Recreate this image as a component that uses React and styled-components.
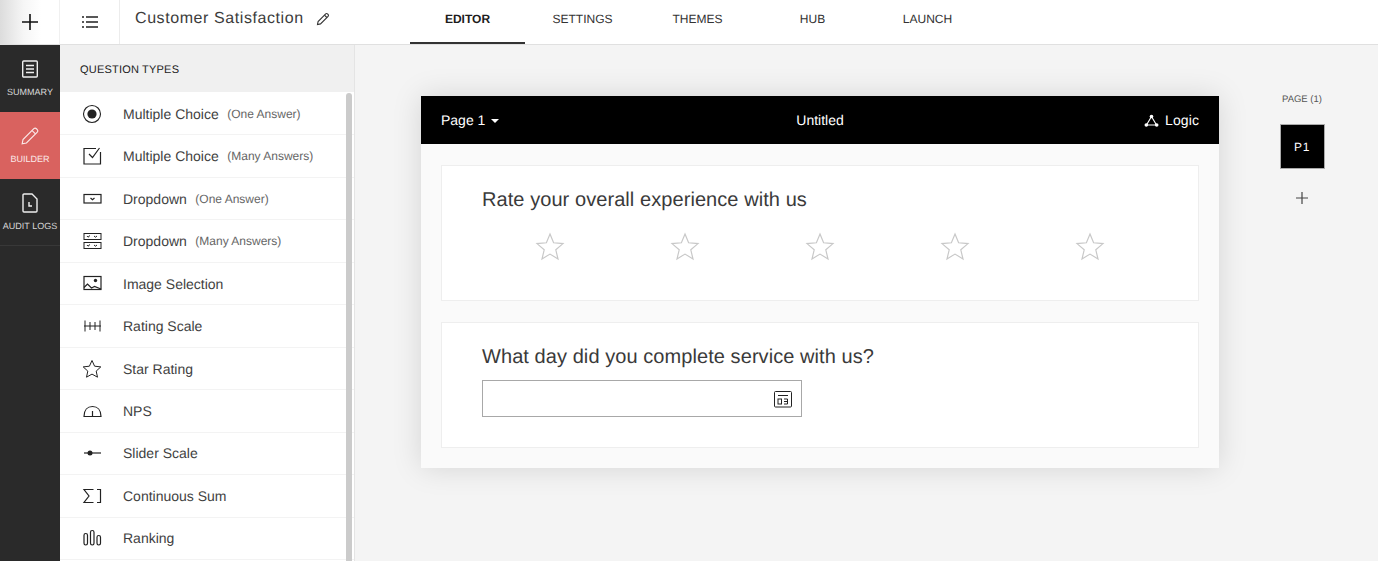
import styled, { createGlobalStyle } from 'styled-components';

const GlobalStyle = createGlobalStyle`
    html, body {
        margin: 0;
        height: 100%;
        overflow: hidden;
        background: #f4f4f4;
        font-family: "Liberation Sans", Arial, sans-serif;
        text-rendering: geometricPrecision;
    }
    * { box-sizing: border-box; }
`

const Page = styled.div`
    display: flex;
    flex-direction: column;
    width: 1378px;
    height: 561px;
    overflow: hidden;
`

const TopBar = styled.header`
    display: flex;
    flex: none;
    height: 45px;
    background: #fff;
    border-bottom: 1px solid #e0e0e0;
`

const AddCell = styled.div`
    display: flex;
    align-items: center;
    justify-content: center;
    width: 60px;
    background: linear-gradient(90deg, #dcdcdc 0%, #f6f6f6 40%, #fff 70%);
    border-right: 1px solid #f0f0f0;
`

const MenuCell = styled.div`
    display: flex;
    align-items: center;
    justify-content: center;
    width: 60px;
    border-right: 1px solid #ececec;
`

const TitleCell = styled.div`
    display: flex;
    align-items: center;
    gap: 12px;
    width: 290px;
    padding: 0 0 6px 15px;
    font-size: 16px;
    letter-spacing: 0.58px;
    color: #3c3c3c;
`

const Tabs = styled.nav`
    display: flex;
`

const Tab = styled.a`
    display: flex;
    align-items: center;
    justify-content: center;
    width: 115px;
    height: 44px;
    padding-bottom: 5px;
    font-size: 12px;
    font-weight: ${({ $active }) => ($active ? 700 : 400)};
    color: ${({ $active }) => ($active ? '#1c1c1c' : '#333')};
    border-bottom: 2px solid ${({ $active }) => ($active ? '#333' : 'transparent')};
`

const Body = styled.div`
    display: flex;
    flex: 1;
    min-height: 0;
`

const Rail = styled.aside`
    flex: none;
    width: 60px;
    background: #2a2a2a;
`

const RailItem = styled.a`
    display: flex;
    flex-direction: column;
    align-items: center;
    height: 67px;
    padding-top: 14px;
    gap: 8px;
    font-size: 9px;
    line-height: 10px;
    white-space: nowrap;
    color: ${({ $active }) => ($active ? '#fbe9e9' : '#d8d8d8')};
    background: ${({ $active }) => ($active ? '#d9625f' : 'transparent')};
    border-bottom: ${({ $divided }) => ($divided ? '1px solid #383838' : 'none')};
`

const RailIcon = styled.span`
    display: flex;
    align-items: center;
    justify-content: center;
    height: 20px;
`

const Panel = styled.section`
    display: flex;
    flex-direction: column;
    flex: none;
    width: 295px;
    background: #fff;
    border-right: 1px solid #e4e4e4;
`

const PanelHeading = styled.h3`
    display: flex;
    align-items: center;
    flex: none;
    height: 47px;
    margin: 0;
    padding: 2px 0 0 20px;
    background: #f0f0f0;
    font-size: 11px;
    font-weight: 400;
    letter-spacing: 0.2px;
    color: #222;
`

const PanelList = styled.div`
    position: relative;
    flex: 1;
    min-height: 0;
    padding-top: 1px;
    overflow: hidden;
`

const Scrollbar = styled.div`
    position: absolute;
    top: 1px;
    right: 2px;
    bottom: 0;
    width: 6px;
    border-radius: 3px 3px 0 0;
    background: #cbcbcb;
`

const TypeRow = styled.div`
    display: flex;
    align-items: center;
    height: 42.47px;
    padding-left: 21px;
    border-bottom: 1px solid #f3f3f3;
    font-size: 14px;
    color: #3f3f3f;
`

const TypeIcon = styled.span`
    display: flex;
    align-items: center;
    justify-content: center;
    flex: none;
    width: 22px;
    height: 22px;
    margin-right: 20px;
`

const TypeHint = styled.span`
    margin-left: 8.5px;
    font-size: 12px;
    color: #666;
`

const Canvas = styled.main`
    display: flex;
    flex: 1;
    min-width: 0;
    padding: 51px 0 0 66px;
    background: #f4f4f4;
`

const SurveyCard = styled.div`
    flex: none;
    width: 798px;
    height: 372px;
    background: #fafafa;
    box-shadow: 0 0 28px rgba(0, 0, 0, 0.13);
`

const CardHeader = styled.div`
    display: grid;
    grid-template-columns: 1fr auto 1fr;
    align-items: center;
    height: 48px;
    padding: 0 20px;
    background: #000;
    color: #fff;
    font-size: 14px;
`

const PageSelect = styled.div`
    display: flex;
    align-items: center;
    gap: 6px;
`

const Caret = styled.span`
    width: 0;
    height: 0;
    border-left: 4px solid transparent;
    border-right: 4px solid transparent;
    border-top: 4px solid #fff;
    margin-top: 2px;
`

const LogicLink = styled.div`
    display: flex;
    align-items: center;
    justify-content: flex-end;
    gap: 6px;
    letter-spacing: 0.1px;
`

const Questions = styled.div`
    display: flex;
    flex-direction: column;
    gap: 21px;
    padding: 21px 20px 0 20px;
`

const Question = styled.div`
    height: ${({ $height }) => $height}px;
    padding: 22px 40px 0;
    background: #fff;
    border: 1px solid #eee;
`

const QuestionTitle = styled.h2`
    margin: 0;
    font-size: 20px;
    line-height: 24px;
    font-weight: 400;
    letter-spacing: 0.07px;
    color: #3a3a3a;
`

const Stars = styled.div`
    display: flex;
    margin-top: 20px;
`

const StarCell = styled.div`
    display: flex;
    justify-content: center;
    width: 135px;
`

const DateField = styled.div`
    display: flex;
    align-items: center;
    justify-content: flex-end;
    width: 320px;
    height: 37px;
    margin-top: 11px;
    padding-right: 9px;
    background: #fff;
    border: 1px solid #a8a8a8;
`

const PagesColumn = styled.aside`
    display: flex;
    flex-direction: column;
    align-items: center;
    flex: none;
    width: 46px;
    margin: -2px 0 0 60px;
`

const PagesLabel = styled.div`
    font-size: 9.5px;
    line-height: 12px;
    color: #555;
    white-space: nowrap;
`

const PageThumb = styled.div`
    display: flex;
    align-items: center;
    justify-content: center;
    width: 45px;
    height: 45px;
    margin-top: 18px;
    background: #000;
    border: 1px solid #aaa;
    color: #fff;
    font-size: 12px;
    font-weight: 400;
    letter-spacing: 0.6px;
`

const AddPage = styled.div`
    display: flex;
    margin-top: 22px;
`

const Glyph = ({ sw = 1.2, children }) => (
    <svg width="22" height="22" viewBox="0 0 22 22" fill="none" stroke="#222" strokeWidth={sw}>
        {children}
    </svg>
)

const icons = {
    radio: (
        <Glyph sw={1.1}>
            <circle cx="11" cy="11" r="8.5" />
            <circle cx="11" cy="11" r="4.6" fill="#222" stroke="none" />
        </Glyph>
    ),
    check: (
        <Glyph>
            <path d="M15 3.500H3v15.500h16.500V7" />
            <path d="M8 9l3.500 3.500L18.500 3" />
        </Glyph>
    ),
    dropdown: (
        <Glyph>
            <rect x="3" y="6.500" width="17" height="8.500" />
            <path d="M9.500 10l2 1.800 2-1.800" />
        </Glyph>
    ),
    dropdowns: (
        <Glyph sw={1}>
            <rect x="3" y="3.500" width="17" height="6" />
            <rect x="3" y="12.500" width="17" height="6" />
            <path d="M6 6l1 1.200L9 5.500M13 6l1.500 1.200L16 6M6 15l1 1.200L9 14.500M13 15l1.500 1.200L16 15" />
        </Glyph>
    ),
    image: (
        <Glyph>
            <rect x="3" y="3.500" width="17" height="13" />
            <circle cx="14.500" cy="7.500" r="1.700" fill="#222" stroke="none" />
            <path d="M3 14.500l3.500-3.500 4 4 3-1.500 6.500 2.500" />
        </Glyph>
    ),
    scale: (
        <Glyph sw={1}>
            <path d="M3 11h17M4 5.500v11M9 7v8M14 7v8M19 5.500v11" />
        </Glyph>
    ),
    star: (
        <Glyph sw={1}>
            <path d="M11 2.500l2.600 5.700 6.200.7-4.600 4.200 1.300 6.100L11 16.100l-5.500 3.100 1.300-6.100-4.600-4.200 6.200-.7z" />
        </Glyph>
    ),
    nps: (
        <Glyph>
            <path d="M3 16.500C3 10 6.500 6.500 11.500 6.500S20 10 20 16.500z" />
            <path d="M11.500 11v5.500" />
        </Glyph>
    ),
    slider: (
        <Glyph>
            <path d="M3 11h17" />
            <circle cx="9" cy="11" r="2.500" fill="#222" stroke="none" />
        </Glyph>
    ),
    sum: (
        <Glyph>
            <path d="M12.500 4.500H3l5 6.500-5 6.500h9.500M16 4.500h3.500v13H16" />
        </Glyph>
    ),
    ranking: (
        <Glyph>
            <rect x="3" y="6.500" width="3.500" height="11.500" rx="1.700" />
            <rect x="9.500" y="3.500" width="3.500" height="14.500" rx="1.700" />
            <rect x="16" y="8.500" width="3.500" height="9.500" rx="1.700" />
        </Glyph>
    ),
}

const questionTypes = [
    { id: 'radio', label: 'Multiple Choice', hint: '(One Answer)' },
    { id: 'check', label: 'Multiple Choice', hint: '(Many Answers)' },
    { id: 'dropdown', label: 'Dropdown', hint: '(One Answer)' },
    { id: 'dropdowns', label: 'Dropdown', hint: '(Many Answers)' },
    { id: 'image', label: 'Image Selection' },
    { id: 'scale', label: 'Rating Scale' },
    { id: 'star', label: 'Star Rating' },
    { id: 'nps', label: 'NPS' },
    { id: 'slider', label: 'Slider Scale' },
    { id: 'sum', label: 'Continuous Sum' },
    { id: 'ranking', label: 'Ranking' },
]

const tabs = ['EDITOR', 'SETTINGS', 'THEMES', 'HUB', 'LAUNCH']

const Pencil = ({ size = 14, stroke = '#333', sw = 1.1 }) => (
    <svg width={size} height={size} viewBox="0 0 14 14" fill="none" stroke={stroke} strokeWidth={sw}>
        <path d="M1.500 12.500l.6-3L9.700 1.900a1.300 1.300 0 0 1 1.800 0l.6.6a1.300 1.300 0 0 1 0 1.800L4.500 11.900z" />
        <path d="M8.500 3.200l2.300 2.300" />
    </svg>
)

const App = () => {
    return (
        <Page>
            <GlobalStyle />
            <TopBar>
                <AddCell>
                    <svg width="18" height="18" viewBox="0 0 18 18" stroke="#111" strokeWidth="1.600">
                        <path d="M9 1v16M1 9h16" />
                    </svg>
                </AddCell>
                <MenuCell>
                    <svg width="18" height="14" viewBox="0 0 18 14" stroke="#222" strokeWidth="1.500">
                        <path d="M5 2h12M5 7h12M5 12h12M1 2h2M1 7h2M1 12h2" />
                    </svg>
                </MenuCell>
                <TitleCell>
                    Customer Satisfaction
                    <Pencil />
                </TitleCell>
                <Tabs>
                    {tabs.map((t, i) => <Tab key={t} $active={i === 0}>{t}</Tab>)}
                </Tabs>
            </TopBar>
            <Body>
                <Rail>
                    <RailItem>
                        <RailIcon>
                            <svg width="16" height="18" viewBox="0 0 16 18" fill="none" stroke="#eee" strokeWidth="1.400">
                                <rect x="0.700" y="1" width="14.600" height="16" rx="1" />
                                <path d="M4 5.500h8M4 9h8M4 12.500h8" />
                            </svg>
                        </RailIcon>
                        SUMMARY
                    </RailItem>
                    <RailItem $active>
                        <RailIcon>
                            <Pencil size={20} stroke="#fbe9e9" sw={0.8} />
                        </RailIcon>
                        BUILDER
                    </RailItem>
                    <RailItem $divided>
                        <RailIcon>
                            <svg width="16" height="20" viewBox="0 0 16 20" fill="none" stroke="#eee" strokeWidth="1.400">
                                <path d="M1 2a1 1 0 0 1 1-1h8l5 5v12a1 1 0 0 1-1 1H2a1 1 0 0 1-1-1z" />
                                <path d="M7 9v4h3" />
                            </svg>
                        </RailIcon>
                        AUDIT LOGS
                    </RailItem>
                </Rail>
                <Panel>
                    <PanelHeading>QUESTION TYPES</PanelHeading>
                    <PanelList>
                        {questionTypes.map((q, i) => (
                            <TypeRow key={i}>
                                <TypeIcon>{icons[q.id]}</TypeIcon>
                                {q.label}
                                {q.hint && <TypeHint>{q.hint}</TypeHint>}
                            </TypeRow>
                        ))}
                        <Scrollbar />
                    </PanelList>
                </Panel>
                <Canvas>
                    <SurveyCard>
                        <CardHeader>
                            <PageSelect>Page 1 <Caret /></PageSelect>
                            <span>Untitled</span>
                            <LogicLink>
                                <svg width="15" height="13" viewBox="0 0 15 13" fill="none" stroke="#fff" strokeWidth="1.100">
                                    <path d="M7.500 2.500L2.500 11h10z" />
                                    <circle cx="7.500" cy="2.500" r="1.800" fill="#fff" stroke="none" />
                                    <circle cx="2.300" cy="11" r="1.800" fill="#fff" stroke="none" />
                                    <circle cx="12.700" cy="11" r="1.800" fill="#fff" stroke="none" />
                                </svg>
                                Logic
                            </LogicLink>
                        </CardHeader>
                        <Questions>
                            <Question $height={136}>
                                <QuestionTitle>Rate your overall experience with us</QuestionTitle>
                                <Stars>
                                    {[1, 2, 3, 4, 5].map(n => (
                                        <StarCell key={n}>
                                            <svg width="30" height="30" viewBox="0 0 30 30" fill="none" stroke="#c8c8c8" strokeWidth="1.200">
                                                <path d="M15 2l3.600 8.800 9.400.8-7.200 6.200 2.200 9.200L15 22.100 7 27l2.200-9.200L2 11.600l9.400-.8z" />
                                            </svg>
                                        </StarCell>
                                    ))}
                                </Stars>
                            </Question>
                            <Question $height={126}>
                                <QuestionTitle>What day did you complete service with us?</QuestionTitle>
                                <DateField>
                                    <svg width="18" height="18" viewBox="0 0 18 18" fill="none" stroke="#222" strokeWidth="1">
                                        <rect x="0.500" y="1.500" width="17" height="15.500" rx="1" />
                                        <path d="M4 5.500h10M4 1v1M14 1v1" />
                                        <rect x="4" y="9" width="3.500" height="5" />
                                        <path d="M10 9h3.500v5H10M10 11.500h3.500" />
                                    </svg>
                                </DateField>
                            </Question>
                        </Questions>
                    </SurveyCard>
                    <PagesColumn>
                        <PagesLabel>PAGE (1)</PagesLabel>
                        <PageThumb>P1</PageThumb>
                        <AddPage>
                            <svg width="14" height="14" viewBox="0 0 14 14" stroke="#444" strokeWidth="1.200">
                                <path d="M7 1v12M1 7h12" />
                            </svg>
                        </AddPage>
                    </PagesColumn>
                </Canvas>
            </Body>
        </Page>
    )
}

export default App;
